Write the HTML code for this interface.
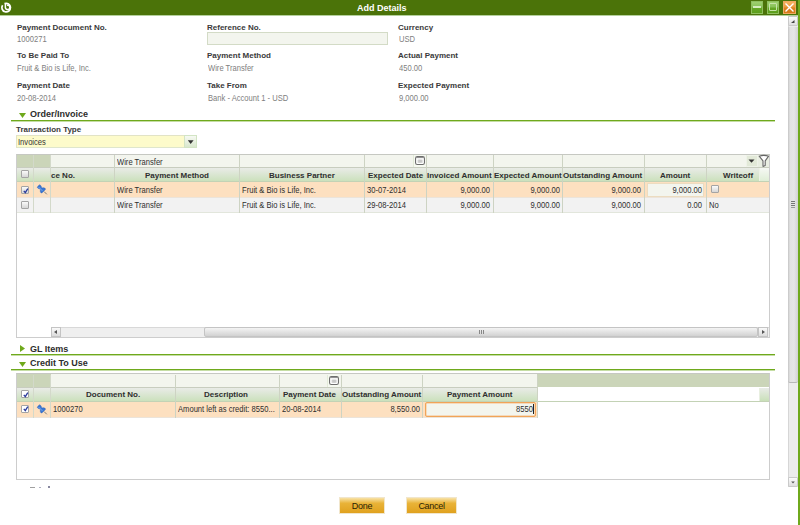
<!DOCTYPE html>
<html><head><meta charset="utf-8">
<style>
*{margin:0;padding:0;box-sizing:border-box}
html,body{width:800px;height:525px;overflow:hidden;background:#fff;font-family:"Liberation Sans",sans-serif;position:relative}
.a{position:absolute}
.t{position:absolute;white-space:nowrap;line-height:1}
.lbl{font-weight:bold;font-size:8px;color:#3a3a3a}
.val{font-size:9px;color:#808080;transform:scaleX(0.845);transform-origin:0 0}
.hdr{position:absolute;left:0;top:0;width:800px;height:15px;background:#4b7309}
.sec{position:absolute;left:11px;width:764px;height:1px;background:#6fa91c;box-shadow:0 1px 0 rgba(111,169,28,0.4)}
.sect{font-weight:bold;font-size:9px;color:#2d2d2d}
.grid{position:absolute;border:1px solid #c6cbbd;background:#fff}
.c{position:absolute;top:0;height:100%;border-right:1px solid #cfd6c4}
.fc{background:#f3f5ee}

.gt{font-size:8.6px;color:#2e2e2e;transform:scaleX(0.885);transform-origin:0 0}
.gt.r{transform-origin:100% 0}
.gh{font-weight:bold;font-size:8px;color:#2f2f2f}
.cb{position:absolute;width:8px;height:8px;border:1px solid #a4a4a4;background:linear-gradient(#fafafa,#d6d6d6);border-radius:1px}
</style></head><body>

<!-- header -->
<div class="hdr"></div>
<svg class="a" style="left:0;top:0" width="16" height="16"><path d="M2.6 5.2A4.3 4.3 0 1 0 4.6 3.6" stroke="#fff" stroke-width="1.7" fill="none"/><path d="M5.4 3.2V7.6A2.2 2.2 0 1 0 6.9 5.3" stroke="#fff" stroke-width="1.5" fill="none"/></svg>
<div class="a" style="left:0;top:15px;width:798px;height:1px;background:#b4d09c"></div>
<div class="t" style="left:357px;top:4px;font-weight:bold;font-size:9px;color:#fff">Add Details</div>
<div class="a" style="left:751px;top:1px;width:12px;height:13px;background:linear-gradient(#9fd070 0%,#86c056 48%,#66a826 52%,#5c9e1c 100%);border:1px solid #8fbf5e"></div>
<div class="a" style="left:753px;top:6px;width:8px;height:2px;background:#d6ecbf"></div>
<div class="a" style="left:767px;top:1px;width:12px;height:13px;background:linear-gradient(#9fd070 0%,#86c056 48%,#66a826 52%,#5c9e1c 100%);border:1px solid #8fbf5e"></div>
<div class="a" style="left:769px;top:3px;width:8px;height:8px;border:1px solid #c6e2a8;border-radius:1px"></div>
<div class="a" style="left:783px;top:1px;width:13px;height:13px;background:linear-gradient(#f6b060 0%,#eb9a3c 48%,#dd8222 52%,#d67a1a 100%);border:1px solid #eea862"></div>
<svg class="a" style="left:783px;top:1px" width="13" height="13"><path d="M2.5 2.5L10.5 10.5M10.5 2.5L2.5 10.5" stroke="#fff" stroke-width="1.4"/></svg>
<div class="a" style="left:798px;top:0;width:2px;height:525px;background:#6fa91c"></div>

<!-- vertical scrollbar -->
<div class="a" style="left:788px;top:16px;width:10px;height:471px;background:#ececec;border-left:1px solid #d6d6d6"></div>
<div class="a" style="left:788px;top:16px;width:10px;height:10px;background:linear-gradient(#fcfcfc,#dedede);border:1px solid #cacaca;border-radius:1px"></div>
<svg class="a" style="left:790px;top:19px" width="6" height="5"><path d="M1 4L4.5 1L4.5 4Z" fill="#444"/></svg>
<div class="a" style="left:788px;top:27px;width:10px;height:356px;background:linear-gradient(90deg,#c4c4c4 0,#e2e2e2 20%,#e6e6e6 60%,#d2d2d2 100%);border-bottom:1px solid #b8b8b8;border-radius:0 0 2px 2px"></div>
<div class="a" style="left:791px;top:201px;width:4px;height:1px;background:#777;box-shadow:0 2px 0 #777,0 4px 0 #777,0 6px 0 #999"></div>
<div class="a" style="left:788px;top:477px;width:10px;height:10px;background:linear-gradient(#fcfcfc,#dedede);border:1px solid #cacaca;border-radius:1px"></div>
<svg class="a" style="left:790px;top:480px" width="6" height="5"><path d="M1.2 1.5H4.8L3 3.6Z" fill="#555"/></svg>

<!-- form fields -->
<div class="t lbl" style="left:17px;top:23.5px">Payment Document No.</div>
<div class="t val" style="left:17.2px;top:34.7px">1000271</div>
<div class="t lbl" style="left:207px;top:23.5px">Reference No.</div>
<div class="a" style="left:207px;top:32px;width:181px;height:13px;background:#f3f5ee;border:1px solid #d3dbc6"></div>
<div class="t lbl" style="left:398px;top:23.5px">Currency</div>
<div class="t val" style="left:399.2px;top:34.7px">USD</div>

<div class="t lbl" style="left:17px;top:52px">To Be Paid To</div>
<div class="t val" style="left:17.2px;top:64px">Fruit &amp; Bio is Life, Inc.</div>
<div class="t lbl" style="left:207px;top:52px">Payment Method</div>
<div class="t val" style="left:208.2px;top:64px">Wire Transfer</div>
<div class="t lbl" style="left:398px;top:52px">Actual Payment</div>
<div class="t val" style="left:399.2px;top:64px">450.00</div>

<div class="t lbl" style="left:17px;top:82px">Payment Date</div>
<div class="t val" style="left:17.2px;top:93.5px">20-08-2014</div>
<div class="t lbl" style="left:207px;top:82px">Take From</div>
<div class="t val" style="left:208.2px;top:93.5px">Bank - Account 1 - USD</div>
<div class="t lbl" style="left:398px;top:82px">Expected Payment</div>
<div class="t val" style="left:399.2px;top:93.5px">9,000.00</div>

<!-- Order/Invoice section -->
<svg class="a" style="left:19px;top:113px" width="8" height="6"><path d="M0 0H7L3.5 5Z" fill="#6fa91c"/></svg>
<div class="t sect" style="left:30px;top:110px">Order/Invoice</div>
<div class="sec" style="top:120px"></div>
<div class="t lbl" style="left:16px;top:126px">Transaction Type</div>
<div class="a" style="left:16px;top:135px;width:181px;height:13px;background:#fdfbcb;border:1px solid #e2e3c6;border-right-color:#d3e2c6;border-bottom-color:#dfe6cc"></div>
<div class="a" style="left:184px;top:135px;width:13px;height:13px;background:linear-gradient(#f6f9f2,#d9e7cd);border:1px solid #d2e4c4"></div>
<svg class="a" style="left:187px;top:140px" width="8" height="5"><path d="M0.8 0.3H6.6L3.7 3.9Z" fill="#333"/></svg>
<div class="t val" style="left:18px;top:137.5px;color:#333">Invoices</div>

<!-- GRID 1 -->
<div class="a" style="left:16px;top:154px;width:754px;height:184px;border:1px solid #cdcdcd;border-top:1px solid #c6c8c2;background:#fff"></div>
<!-- filter row -->
<div class="a" style="left:17px;top:155px;width:752px;height:12px;background:#f3f5ee"></div>
<div class="a" style="left:17px;top:155px;width:33px;height:12px;background:#cbd5b9"></div>
<div class="a" style="left:17px;top:167px;width:752px;height:1px;background:#c8cdbf"></div>
<!-- header row -->
<div class="a" style="left:17px;top:168px;width:752px;height:14px;background:linear-gradient(#e9ebe7,#c9e0b9)"></div>
<div class="a" style="left:17px;top:181px;width:752px;height:1px;background:#c3d2b5"></div>
<!-- row 1 -->
<div class="a" style="left:17px;top:182px;width:752px;height:15px;background:#fde0c0"></div>
<div class="a" style="left:17px;top:197px;width:752px;height:1px;background:#ece4da"></div>
<!-- row 2 -->
<div class="a" style="left:17px;top:198px;width:752px;height:14px;background:#f2f2f2"></div>
<div class="a" style="left:17px;top:212px;width:752px;height:1px;background:#e2e6dc"></div>
<!-- column lines -->
<div class="a" style="left:33px;top:155px;width:1px;height:58px;background:#d3d9ca"></div>
<div class="a" style="left:50px;top:155px;width:1px;height:58px;background:#d3d9ca"></div>
<div class="a" style="left:114px;top:155px;width:1px;height:58px;background:#cdd3c3"></div>
<div class="a" style="left:239px;top:155px;width:1px;height:58px;background:#cdd3c3"></div>
<div class="a" style="left:364px;top:155px;width:1px;height:58px;background:#cdd3c3"></div>
<div class="a" style="left:426px;top:155px;width:1px;height:58px;background:#cdd3c3"></div>
<div class="a" style="left:493px;top:155px;width:1px;height:58px;background:#cdd3c3"></div>
<div class="a" style="left:562px;top:155px;width:1px;height:58px;background:#cdd3c3"></div>
<div class="a" style="left:644px;top:155px;width:1px;height:58px;background:#cdd3c3"></div>
<div class="a" style="left:706px;top:155px;width:1px;height:58px;background:#cdd3c3"></div>
<!-- filter row items -->
<div class="t gt" style="left:117px;top:157.5px">Wire Transfer</div>
<div class="a" style="left:413px;top:155px;width:1px;height:12px;background:#e3ebd9"></div><div class="a" style="left:414px;top:155px;width:11px;height:12px;background:#f6f9f1"></div><svg class="a" style="left:415px;top:156px" width="11" height="10"><rect x="0.55" y="0.6" width="8.9" height="7.9" rx="1.8" fill="#fff" stroke="#6e6e6e" stroke-width="1.1"/><rect x="1.2" y="1.1" width="7.6" height="1" fill="#8a8a8a"/><path d="M2.6 3.6H7.6V6.8H2.6Z" fill="#d2d2d2"/><path d="M4.2 3.6V6.8M5.9 3.6V6.8" stroke="#b4b4b4" stroke-width="0.5"/></svg>
<div class="a" style="left:746px;top:155px;width:12px;height:12px;background:#e2e9d8;border:1px solid #eef2e8"></div>
<svg class="a" style="left:748px;top:159px" width="8" height="5"><path d="M0.5 0.5H6.5L3.5 3.8Z" fill="#333"/></svg>
<div class="a" style="left:758px;top:155px;width:11px;height:12px;background:#e9eee2"></div>
<svg class="a" style="left:758px;top:154px" width="12" height="14"><path d="M1.2 2.2Q5.8 0.6 10.6 2.2L7.2 6.8V11.6L5 12.4V6.8Z" fill="#fff" stroke="#666" stroke-width="1.1" stroke-linejoin="round"/></svg>
<div class="a" style="left:759px;top:168px;width:10px;height:13px;background:linear-gradient(#f6f8f4,#dfeed6);border-left:1px solid #edf2e6"></div>
<!-- header text -->
<div class="cb" style="left:21px;top:170px"></div>
<div class="t gh" style="left:51px;top:171.5px">ce No.</div>
<div class="t gh" style="left:145px;top:171.5px">Payment Method</div>
<div class="t gh" style="left:269px;top:171.5px">Business Partner</div>
<div class="t gh" style="left:368px;top:171.5px">Expected Date</div>
<div class="t gh" style="left:427px;top:171.5px">Invoiced Amount</div>
<div class="t gh" style="left:494px;top:171.5px">Expected Amount</div>
<div class="t gh" style="left:563px;top:171.5px">Outstanding Amount</div>
<div class="t gh" style="left:660px;top:171.5px">Amount</div>
<div class="t gh" style="left:723px;top:171.5px">Writeoff</div>
<!-- row1 -->
<div class="cb" style="left:21px;top:186px"></div>
<svg class="a" style="left:22px;top:187px" width="8" height="8"><path d="M1.8 3.8L3.3 5.6L5.8 1.6" stroke="#2a3a9c" stroke-width="1.3" fill="none"/></svg>
<svg class="a" style="left:33px;top:181px" width="18" height="18"><g transform="translate(5.4 4.9) rotate(-45) scale(0.85)"><path d="M0 9.5V14" stroke="#7a7a7a" stroke-width="1.1"/><path d="M-2.3 0.3Q0 -0.6 2.3 0.3L2 2.6L1 4.6Q3.3 5.6 3.6 7.6Q3.4 8.6 2.6 8.8L-2.6 8.8Q-3.4 8.6 -3.6 7.6Q-3.3 5.6 -1 4.6L-2 2.6Z" fill="#3a78d4" stroke="#2a5cb8" stroke-width="0.5"/><path d="M-0.8 1V7.5" stroke="#8fb8f0" stroke-width="0.8"/></g></svg>
<div class="t gt" style="left:117px;top:186px">Wire Transfer</div>
<div class="t gt" style="left:242px;top:186px">Fruit &amp; Bio is Life, Inc.</div>
<div class="t gt" style="left:367px;top:186px">30-07-2014</div>
<div class="t gt r" style="left:427px;top:186px;width:63px;text-align:right">9,000.00</div>
<div class="t gt r" style="left:494px;top:186px;width:66px;text-align:right">9,000.00</div>
<div class="t gt r" style="left:563px;top:186px;width:78px;text-align:right">9,000.00</div>
<div class="a" style="left:647px;top:183px;width:57px;height:14px;background:#f3f5ee;border:1px solid #ecdcc0"></div>
<div class="t gt r" style="left:648px;top:186px;width:54px;text-align:right">9,000.00</div>
<div class="cb" style="left:711px;top:185px"></div>
<!-- row2 -->
<div class="cb" style="left:21px;top:201px"></div>
<div class="t gt" style="left:117px;top:201px">Wire Transfer</div>
<div class="t gt" style="left:242px;top:201px">Fruit &amp; Bio is Life, Inc.</div>
<div class="t gt" style="left:367px;top:201px">29-08-2014</div>
<div class="t gt r" style="left:427px;top:201px;width:63px;text-align:right">9,000.00</div>
<div class="t gt r" style="left:494px;top:201px;width:66px;text-align:right">9,000.00</div>
<div class="t gt r" style="left:563px;top:201px;width:78px;text-align:right">9,000.00</div>
<div class="t gt r" style="left:648px;top:201px;width:54px;text-align:right">0.00</div>
<div class="t gt" style="left:709px;top:201px">No</div>
<!-- h scrollbar -->
<div class="a" style="left:51px;top:327px;width:718px;height:10px;background:#efefef;border-top:1px solid #d8d8d8"></div>
<div class="a" style="left:51px;top:327px;width:10px;height:10px;background:linear-gradient(#fafafa,#dcdcdc);border:1px solid #c4c4c4"></div>
<svg class="a" style="left:54px;top:330px" width="4" height="5"><path d="M3 0V4L0 2Z" fill="#555"/></svg>
<div class="a" style="left:204px;top:327px;width:554px;height:10px;background:linear-gradient(#f4f4f4,#d2d2d2);border:1px solid #c4c4c4;border-radius:2px"></div>
<div class="a" style="left:479px;top:330px;width:5px;height:4px;border-left:1px solid #888;border-right:1px solid #888"></div>
<div class="a" style="left:481px;top:330px;width:1px;height:4px;background:#888"></div>
<div class="a" style="left:758px;top:327px;width:10px;height:10px;background:linear-gradient(#fafafa,#dcdcdc);border:1px solid #c4c4c4"></div>
<svg class="a" style="left:762px;top:330px" width="4" height="5"><path d="M0 0V4L3 2Z" fill="#555"/></svg>

<!-- GL Items / Credit to use -->
<svg class="a" style="left:20px;top:345px" width="6" height="8"><path d="M0 0V7L5 3.5Z" fill="#6fa91c"/></svg>
<div class="t sect" style="left:30px;top:344.5px">GL Items</div>
<div class="sec" style="top:354px"></div>
<svg class="a" style="left:19px;top:362px" width="8" height="6"><path d="M0 0H7L3.5 5Z" fill="#6fa91c"/></svg>
<div class="t sect" style="left:30px;top:359px">Credit To Use</div>
<div class="sec" style="top:369px"></div>

<!-- GRID 2 -->
<div class="a" style="left:16px;top:373px;width:754px;height:107px;border:1px solid #cdcdcd;border-top:1px solid #c6c8c2;background:#fff"></div>
<div class="a" style="left:17px;top:374px;width:752px;height:13px;background:#cbd5b9"></div>
<div class="a" style="left:51px;top:374px;width:486px;height:13px;background:#f3f5ee"></div>
<div class="a" style="left:17px;top:387px;width:521px;height:1px;background:#c8cdbf"></div>
<div class="a" style="left:17px;top:388px;width:521px;height:14px;background:linear-gradient(#e9ebe7,#c9e0b9)"></div>
<div class="a" style="left:759px;top:388px;width:10px;height:13px;background:linear-gradient(#e9ebe7,#c9e0b9);border-left:1px solid #e8efe0"></div>
<div class="a" style="left:17px;top:401px;width:752px;height:1px;background:#c3d2b5"></div>
<div class="a" style="left:17px;top:402px;width:521px;height:15px;background:#fde0c0"></div>
<div class="a" style="left:17px;top:417px;width:521px;height:1px;background:#ece4da"></div>
<div class="a" style="left:33px;top:375px;width:1px;height:43px;background:#d3d9ca"></div>
<div class="a" style="left:50px;top:375px;width:1px;height:43px;background:#d3d9ca"></div>
<div class="a" style="left:175px;top:375px;width:1px;height:43px;background:#cdd3c3"></div>
<div class="a" style="left:279px;top:375px;width:1px;height:43px;background:#cdd3c3"></div>
<div class="a" style="left:341px;top:375px;width:1px;height:43px;background:#cdd3c3"></div>
<div class="a" style="left:422px;top:375px;width:1px;height:43px;background:#cdd3c3"></div>
<div class="a" style="left:537px;top:375px;width:1px;height:43px;background:#cdd3c3"></div>
<div class="a" style="left:327px;top:375px;width:1px;height:12px;background:#e3ebd9"></div><div class="a" style="left:328px;top:375px;width:11px;height:12px;background:#f6f9f1"></div><svg class="a" style="left:329px;top:376px" width="11" height="10"><rect x="0.55" y="0.6" width="8.9" height="7.9" rx="1.8" fill="#fff" stroke="#6e6e6e" stroke-width="1.1"/><rect x="1.2" y="1.1" width="7.6" height="1" fill="#8a8a8a"/><path d="M2.6 3.6H7.6V6.8H2.6Z" fill="#d2d2d2"/><path d="M4.2 3.6V6.8M5.9 3.6V6.8" stroke="#b4b4b4" stroke-width="0.5"/></svg>

<div class="cb" style="left:21px;top:390px;background:#fff"></div>
<svg class="a" style="left:22px;top:391px" width="8" height="8"><path d="M1.8 3.8L3.3 5.6L5.8 1.6" stroke="#2a3a9c" stroke-width="1.3" fill="none"/></svg>
<div class="t gh" style="left:86px;top:391px">Document No.</div>
<div class="t gh" style="left:204px;top:391px">Description</div>
<div class="t gh" style="left:283px;top:391px">Payment Date</div>
<div class="t gh" style="left:342px;top:391px">Outstanding Amount</div>
<div class="t gh" style="left:447px;top:391px">Payment Amount</div>

<div class="cb" style="left:21px;top:405px;background:#fff"></div>
<svg class="a" style="left:22px;top:405px" width="8" height="8"><path d="M1.8 3.8L3.3 5.6L5.8 1.6" stroke="#2a3a9c" stroke-width="1.3" fill="none"/></svg>
<svg class="a" style="left:33px;top:401px" width="18" height="18"><g transform="translate(5.4 4.9) rotate(-45) scale(0.85)"><path d="M0 9.5V14" stroke="#7a7a7a" stroke-width="1.1"/><path d="M-2.3 0.3Q0 -0.6 2.3 0.3L2 2.6L1 4.6Q3.3 5.6 3.6 7.6Q3.4 8.6 2.6 8.8L-2.6 8.8Q-3.4 8.6 -3.6 7.6Q-3.3 5.6 -1 4.6L-2 2.6Z" fill="#3a78d4" stroke="#2a5cb8" stroke-width="0.5"/><path d="M-0.8 1V7.5" stroke="#8fb8f0" stroke-width="0.8"/></g></svg>
<div class="t gt" style="left:53px;top:405px">1000270</div>
<div class="t gt" style="left:178px;top:405px">Amount left as credit: 8550...</div>
<div class="t gt" style="left:282px;top:405px">20-08-2014</div>
<div class="t gt r" style="left:342px;top:405px;width:78px;text-align:right">8,550.00</div>
<div class="a" style="left:425px;top:402px;width:111px;height:15px;background:#f3f5ee;border:1px solid #f1a458;box-shadow:inset 0 0 0 0.5px #f6c08a;border-radius:2px"></div>
<div class="t gt r" style="left:425px;top:405px;width:108px;text-align:right">8550</div>
<div class="a" style="left:533px;top:404px;width:1px;height:10px;background:#222"></div>

<!-- bits of Totals -->
<div class="a" style="left:30px;top:487px;width:5px;height:1px;background:#a0a0a0"></div>
<div class="a" style="left:39px;top:487px;width:2px;height:1px;background:#b0b0c0"></div>
<div class="a" style="left:48px;top:486px;width:2px;height:2px;background:#8888a0"></div>

<!-- Buttons -->
<div class="a" style="left:339px;top:497px;width:46px;height:17px;background:linear-gradient(#f8e2a6 0%,#e9b338 35%,#e0a11e 100%);border:1px solid #f1e6cc"></div>
<div class="t" style="left:339px;top:502px;width:46px;text-align:center;font-size:9px;letter-spacing:-0.3px;color:#2a1f05">Done</div>
<div class="a" style="left:406px;top:497px;width:51px;height:17px;background:linear-gradient(#f8e2a6 0%,#e9b338 35%,#e0a11e 100%);border:1px solid #f1e6cc"></div>
<div class="t" style="left:406px;top:502px;width:51px;text-align:center;font-size:9px;letter-spacing:-0.3px;color:#2a1f05">Cancel</div>

</body></html>
